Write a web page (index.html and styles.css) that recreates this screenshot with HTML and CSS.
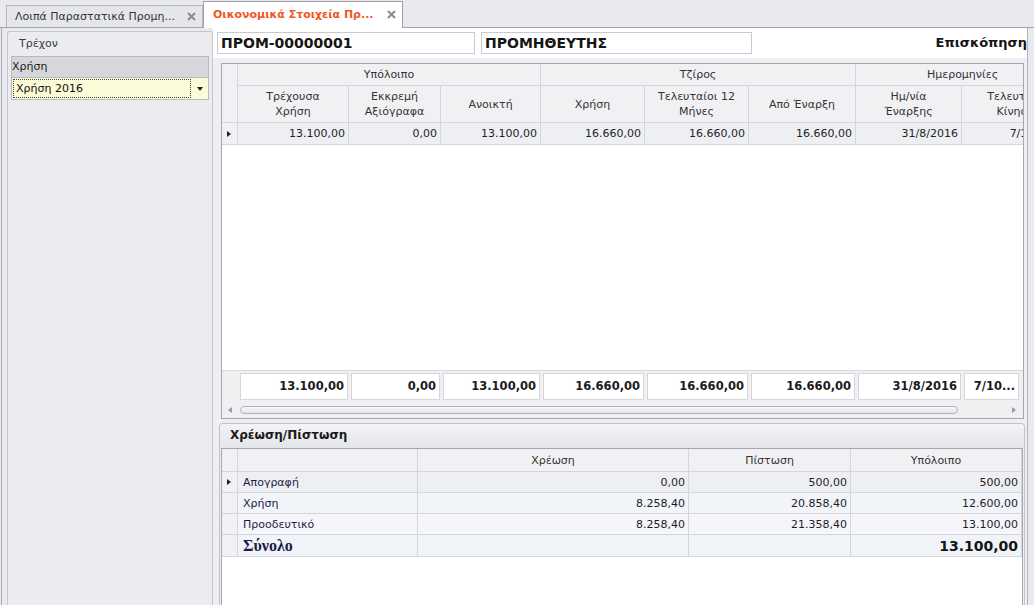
FILE: index.html
```html
<!DOCTYPE html>
<html lang="el">
<head>
<meta charset="utf-8">
<title>Οικονομικά Στοιχεία</title>
<link rel="stylesheet" href="styles.css">
</head>
<body>
<div class="tabs">
  <div class="tab"><span>Λοιπά Παραστατικά Προμη...</span><svg class="x" width="9" height="9" viewBox="0 0 9 9"><path d="M1 1L8 8M8 1L1 8" stroke="#8b8b93" stroke-width="2"/></svg></div>
  <div class="tab active"><span>Οικονομικά Στοιχεία Πρ...</span><svg class="x" width="9" height="9" viewBox="0 0 9 9"><path d="M1 1L8 8M8 1L1 8" stroke="#8b8b93" stroke-width="2"/></svg></div>
</div>
<div class="main">
  <aside class="side">
    <div class="spanel">
      <div class="shead">Τρέχον</div>
      <div class="lbl">Χρήση</div>
      <div class="combo"><span class="focus">Χρήση 2016</span><span class="arrow"></span></div>
    </div>
  </aside>
  <section class="content">
    <div class="top">
      <div class="field">ΠΡΟΜ-00000001</div>
      <div class="field field2">ΠΡΟΜΗΘΕΥΤΗΣ</div>
      <div class="title">Επισκόπηση</div>
    </div>
    <div class="garea">
      <div class="grid1">
        <table class="t1">
          <colgroup><col class="c0"><col class="c1"><col class="c2"><col class="c3"><col class="c4"><col class="c5"><col class="c6"><col class="c7"><col class="c8"></colgroup>
          <tr class="band">
            <th class="ind" rowspan="2"></th>
            <th colspan="3">Υπόλοιπο</th>
            <th colspan="3">Τζίρος</th>
            <th colspan="2">Ημερομηνίες</th>
          </tr>
          <tr class="hdr">
            <th>Τρέχουσα<br>Χρήση</th>
            <th>Εκκρεμή<br>Αξιόγραφα</th>
            <th>Ανοικτή</th>
            <th>Χρήση</th>
            <th>Τελευταίοι 12<br>Μήνες</th>
            <th>Από Έναρξη</th>
            <th>Ημ/νία<br>Έναρξης</th>
            <th>Τελευταία<br>Κίνηση</th>
          </tr>
          <tr class="data">
            <td class="ind"><span class="tri"></span></td>
            <td>13.100,00</td>
            <td>0,00</td>
            <td>13.100,00</td>
            <td>16.660,00</td>
            <td>16.660,00</td>
            <td>16.660,00</td>
            <td>31/8/2016</td>
            <td>7/10/2016</td>
          </tr>
        </table>
        <div class="filler"></div>
        <div class="foot">
          <div class="fc c1"><div class="fb">13.100,00</div></div>
          <div class="fc c2"><div class="fb">0,00</div></div>
          <div class="fc c3"><div class="fb">13.100,00</div></div>
          <div class="fc c4"><div class="fb">16.660,00</div></div>
          <div class="fc c5"><div class="fb">16.660,00</div></div>
          <div class="fc c6"><div class="fb">16.660,00</div></div>
          <div class="fc c7"><div class="fb">31/8/2016</div></div>
          <div class="fc clast"><div class="fb">7/10...</div></div>
        </div>
        <div class="scroll">
          <span class="la"></span>
          <span class="thumb"></span>
          <span class="ra"></span>
        </div>
      </div>
    </div>
    <div class="group">
      <div class="ghead">Χρέωση/Πίστωση</div>
      <div class="grid2">
        <table class="t2">
          <colgroup><col class="c0"><col class="d1"><col class="d2"><col class="d3"><col class="d4"></colgroup>
          <tr class="hdr2">
            <th class="ind"></th>
            <th></th>
            <th>Χρέωση</th>
            <th>Πίστωση</th>
            <th>Υπόλοιπο</th>
          </tr>
          <tr class="row r1">
            <td class="ind"><span class="tri"></span></td>
            <td class="name">Απογραφή</td>
            <td>0,00</td>
            <td>500,00</td>
            <td>500,00</td>
          </tr>
          <tr class="row r2">
            <td class="ind"></td>
            <td class="name">Χρήση</td>
            <td>8.258,40</td>
            <td>20.858,40</td>
            <td>12.600,00</td>
          </tr>
          <tr class="row r3">
            <td class="ind"></td>
            <td class="name">Προοδευτικό</td>
            <td>8.258,40</td>
            <td>21.358,40</td>
            <td>13.100,00</td>
          </tr>
          <tr class="row r4">
            <td class="ind"></td>
            <td class="name sum">Σύνολο</td>
            <td></td>
            <td></td>
            <td class="sumv">13.100,00</td>
          </tr>
        </table>
      </div>
    </div>
  </section>
</div>
</body>
</html>
```
FILE: styles.css
```css
* { box-sizing: border-box; }
body {
  margin: 0;
  width: 1034px;
  height: 605px;
  overflow: hidden;
  background: #e9eaee;
  font-family: "DejaVu Sans", sans-serif;
  font-size: 11px;
  color: #222;
}

/* tabs */
.tabs {
  height: 28px;
  border-bottom: 1px solid #a3a4ab;
  display: flex;
  align-items: flex-end;
  padding-left: 6px;
}
.tab {
  height: 22px;
  width: 197px;
  border: 1px solid #b6b7bd;
  border-bottom: 0;
  background: #e5e6ea;
  display: flex;
  align-items: center;
  justify-content: space-between;
  padding: 0 6px 0 8px;
  color: #333;
  white-space: nowrap;
}
.tab.active {
  height: 27px;
  width: 200px;
  background: #fff;
  border-color: #a0a1a8;
  margin-bottom: -1px;
  color: #f2561d;
  font-weight: bold;
  padding-left: 9px;
  padding-bottom: 1px;
}
.x { flex: none; }

/* main */
.main { display: flex; height: 577px; }
.side {
  flex: none;
  width: 212px;
  margin-left: 1px;
  border-left: 1px solid #a9aab0;
  padding: 3px 0 0 5px;
}
.spanel {
  height: 100%;
  border: 1px solid #c6c7cc;
  border-bottom: 0;
  border-radius: 3px 3px 0 0;
  background: #ebecf0;
}
.shead {
  height: 24px;
  line-height: 24px;
  padding-left: 11px;
  color: #3a3a3a;
}
.lbl {
  margin: 0 3px;
  height: 22px;
  border: 1px solid #b8b9be;
  background: #d6d7db;
  line-height: 20px;
  color: #222;
}
.combo {
  margin: 0 3px;
  height: 22px;
  border: 1px solid #b8b9be;
  border-top: 0;
  background: #fbfbd8;
  display: flex;
  align-items: center;
  padding: 0 1px;
}
.focus {
  width: 178px;
  height: 19px;
  border: 1px dotted #444;
  padding-left: 2px;
  line-height: 17px;
  color: #111;
}
.arrow {
  margin-left: 6px;
  width: 0;
  height: 0;
  border-top: 4px solid #222;
  border-left: 3.5px solid transparent;
  border-right: 3.5px solid transparent;
}

/* content */
.content {
  flex: none;
  width: 815px;
  border-right: 1px solid #b4b5bb;
  display: flex;
  flex-direction: column;
  background: #eeeff2;
}
.top {
  height: 30px;
  flex: none;
  background: #fff;
  display: flex;
  align-items: flex-start;
  padding: 4px 0 0 4px;
}
.field {
  height: 22px;
  width: 258px;
  border: 1px solid #c9cacf;
  font-weight: bold;
  font-size: 14px;
  line-height: 20px;
  padding-left: 3px;
  color: #151515;
}
.field2 { margin-left: 6px; width: 271px; }
.title {
  margin-left: auto;
  font-weight: bold;
  font-size: 13px;
  line-height: 22px;
  color: #151515;
  white-space: nowrap;
}

.garea { height: 365px; flex: none; padding: 5px 0 0 8px; }
.grid1 {
  width: 803px;
  height: 356px;
  border: 1px solid #a6a7ae;
  background: #fff;
  display: flex;
  flex-direction: column;
  overflow: hidden;
}

table { border-spacing: 0; table-layout: fixed; flex: none; }
.t1 { width: 848px; }
.t2 { width: 800px; }
.c0 { width: 16px; }
.c1 { width: 111px; }
.c2 { width: 92px; }
.c3 { width: 100px; }
.c4 { width: 104px; }
.c5 { width: 104px; }
.c6 { width: 107px; }
.c7 { width: 106px; }
.c8 { width: 108px; }
.clast { width: 58px; }
.d1 { width: 180px; }
.d2 { width: 271px; }
.d3 { width: 162px; }
.d4 { width: 171px; }

th, td {
  border-right: 1px solid #d5d6db;
  border-bottom: 1px solid #d5d6db;
  padding: 0 3px;
  white-space: nowrap;
  overflow: hidden;
}
th {
  font-weight: normal;
  color: #333;
  background: #f1f1f4;
  text-align: center;
  line-height: 15px;
}
td { text-align: right; color: #1e1e28; }
.band { height: 22px; }
.hdr { height: 37px; }
.data { height: 22px; }
.data td { background: #eeeff2; }
td.ind { background: #f1f1f4; padding: 0 0 0 5px; text-align: left; }
.tri {
  display: block;
  width: 0;
  height: 0;
  border-left: 4px solid #222;
  border-top: 3.5px solid transparent;
  border-bottom: 3.5px solid transparent;
}

.filler { flex: 1; }
.foot {
  height: 32px;
  flex: none;
  background: #f0f0f3;
  border-top: 1px solid #d9dade;
  display: flex;
  padding-left: 16px;
}
.fc { flex: none; padding: 2px 1px 2px 2px; }
.fb {
  height: 100%;
  background: #fff;
  border: 1px solid #d6d7dc;
  font-weight: bold;
  font-size: 11.5px;
  text-align: right;
  padding-right: 3px;
  line-height: 25px;
  color: #1a1a22;
  white-space: nowrap;
  overflow: hidden;
}
.scroll {
  height: 16px;
  flex: none;
  background: #f0f0f3;
  display: flex;
  align-items: center;
  padding-left: 6px;
}
.la {
  width: 0; height: 0;
  border-right: 4px solid #9a9aa0;
  border-top: 3.5px solid transparent;
  border-bottom: 3.5px solid transparent;
}
.thumb {
  margin-left: 8px;
  width: 718px;
  height: 8px;
  border: 1px solid #b3b4ba;
  border-radius: 4px;
  background: linear-gradient(#f7f7f9, #e2e3e7);
}
.ra {
  margin-left: 54px;
  width: 0; height: 0;
  border-left: 4px solid #9a9aa0;
  border-top: 3.5px solid transparent;
  border-bottom: 3.5px solid transparent;
}

/* group */
.group {
  margin-left: 6px;
  width: 806px;
  flex: 1;
  min-height: 0;
  border: 1px solid #c2c3c9;
  border-bottom: 0;
  border-radius: 4px 4px 0 0;
  background: #eeeff2;
  display: flex;
  flex-direction: column;
}
.ghead {
  height: 24px;
  flex: none;
  line-height: 23px;
  padding-left: 10px;
  font-weight: bold;
  font-size: 12px;
  color: #1a1a1a;
  background: linear-gradient(#f4f4f6, #e4e5e9);
  border-radius: 4px 4px 0 0;
}
.grid2 {
  margin: 0 1px;
  flex: 1;
  border: 1px solid #a6a7ae;
  border-bottom: 0;
  background: #fff;
  overflow: hidden;
}
.hdr2 { height: 23px; }
.row { height: 21px; }
.row.r4 { height: 22px; }
.r1 td { background: #eeeff2; }
.r2 td { background: #f1f4f9; }
.r3 td { background: #f6f5fb; }
.r4 td { background: #f0f3f8; }
.row td.ind { background: #f1f1f4; }
td.name { text-align: left; padding-left: 5px; color: #1c1c44; }
.sum {
  font-family: "Liberation Serif", serif;
  font-weight: bold;
  font-size: 16px;
  color: #151515;
}
.sumv {
  font-weight: bold;
  font-size: 14px;
  color: #151515;
}
```
